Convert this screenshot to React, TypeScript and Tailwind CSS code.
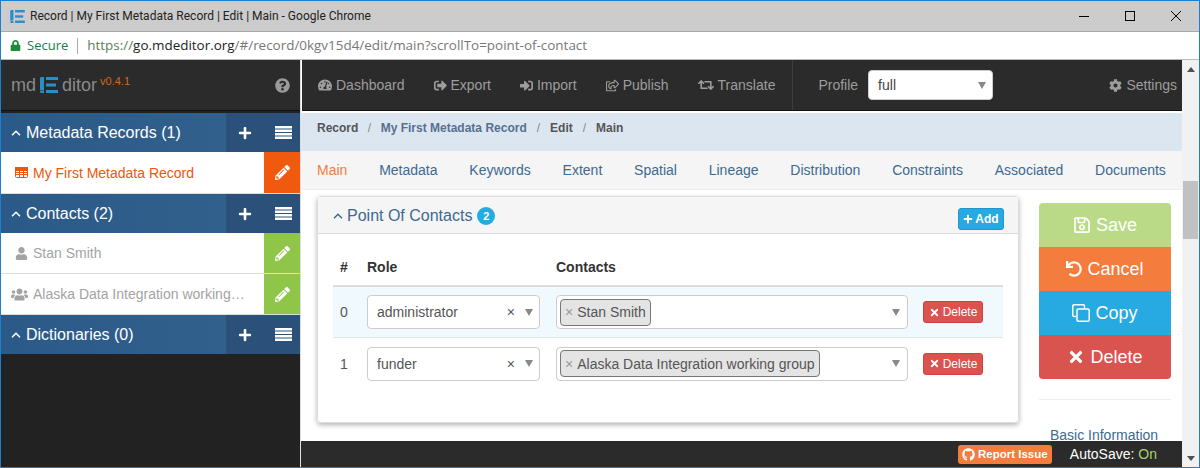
import React from 'react';
import {
  FaTachometerAlt, FaSignOutAlt, FaSignInAlt, FaRegShareSquare, FaRetweet, FaCog, FaQuestionCircle,
  FaPlus, FaPencilAlt, FaUser, FaUsers, FaRegSave, FaUndo,
  FaTimes, FaGithub, FaLock,
} from 'react-icons/fa';

const LogoMark = ({ className }: { className: string }) => (
  <svg viewBox="0 0 18 16" className={className} fill="#2a8fc9">
    <path d="M0 1.5C0 .7.6 0 1.4 0H4v13H1.4c-.6 0-1.1.2-1.4.5z" />
    <path d="M0 14.5c0-.7.6-1 1.4-1H4V16H1.400C.6 16 0 15.300 0 14.500z" />
    <rect x="6" y="0" width="12" height="3" />
    <rect x="6" y="6.500" width="10" height="3" />
    <rect x="6" y="13" width="12" height="3" />
  </svg>
);

const Caret = ({ className }: { className: string }) => (
  <svg viewBox="0 0 10 6" className={`w-[10px] h-[6px] shrink-0 ${className}`} fill="none" stroke="currentColor" strokeWidth="1.500">
    <path d="M1 5.200l4-4 4 4" />
  </svg>
);

const ListIcon = () => (
  <svg viewBox="0 0 17 13" className="w-[17px] h-[13px] ml-[23px]" fill="white">
    <rect x="0" y="0" width="17" height="2.500" />
    <rect x="0" y="3.500" width="17" height="2.500" />
    <rect x="0" y="7" width="17" height="2.500" />
    <rect x="0" y="10.500" width="17" height="2.500" />
  </svg>
);

const TableIcon = () => (
  <svg viewBox="0 0 13 11" className="w-[13px] h-[11px]" fill="none" stroke="#e8590c" strokeWidth="1">
    <rect x="0.500" y="0.500" width="12" height="10" rx="1" />
    <path d="M0 3.500h13M0 5.500h13M0 7.500h13M4.500 3v8M8.500 3v8" />
    <rect x="0.500" y="0.500" width="12" height="2.500" fill="#e8590c" />
  </svg>
);

const CopyIcon = () => (
  <svg viewBox="0 0 18 18" className="w-[18px] h-[18px]" fill="none" stroke="white" strokeWidth="1.500">
    <path d="M4 12.500H2a1.200 1.200 0 0 1-1.200-1.200V2A1.200 1.200 0 0 1 2 .8h9.300A1.200 1.200 0 0 1 12.500 2v2" />
    <rect x="5" y="5" width="12.200" height="12.200" rx="1.200" />
  </svg>
);

const Triangle = () => (
  <span className="w-0 h-0 border-x-[4px] border-x-transparent border-t-[7px] border-t-[#888] shrink-0" />
);

const SectionHeader = ({ title }: { title: string }) => (
  <div className="h-[39px] shrink-0 flex items-stretch bg-gradient-to-r from-[#2c5a88] to-[#34628f] text-white">
    <div className="flex-1 flex items-center pl-[10px] text-base">
      <Caret className="mr-[5px]" />
      <span>{title}</span>
    </div>
    <div className="w-[74px] bg-[#2b5079] flex items-center">
      <FaPlus className="text-[14px] ml-[12px]" />
      <ListIcon />
    </div>
  </div>
);

const SideItem = ({
  icon, label, color, editBg, tall,
}: { icon: React.ReactNode; label: string; color: string; editBg: string; tall?: boolean }) => (
  <div className={`${tall ? 'h-[41px]' : 'h-[40px]'} shrink-0 flex items-stretch bg-white`}>
    <div className={`flex-1 min-w-0 flex items-center text-sm pr-[18px] ${color}`}>
      <span className="w-[32px] flex justify-end pr-[5px] shrink-0">{icon}</span>
      <span className="truncate">{label}</span>
    </div>
    <div className={`w-[36px] flex items-center justify-center text-white ${editBg}`}>
      <FaPencilAlt className="text-[15px]" />
    </div>
  </div>
);

const Nav = ({ icon, label }: { icon: React.ReactNode; label: string }) => (
  <span className="flex items-center gap-[4px] text-sm text-[#9d9d9d]">
    {icon}
    {label}
  </span>
);

const tabs = ['Metadata', 'Keywords', 'Extent', 'Spatial', 'Lineage', 'Distribution', 'Constraints', 'Associated', 'Documents'];

const Row = ({
  idx, role, contact, striped,
}: { idx: string; role: string; contact: string; striped?: boolean }) => (
  <div className={`h-[51px] flex items-center pl-[7px] ${striped ? 'bg-[#f0f9fd] border-b border-[#e5e5e5]' : 'bg-white'}`}>
    <span className="w-[27px] text-sm text-[#555]">{idx}</span>
    <div className="w-[173px] h-[34px] border border-[#ccc] rounded flex items-center pl-[9px] pr-[6px] text-sm text-[#555] bg-white">
      <span className="flex-1">{role}</span>
      <span className="text-sm mr-[10px]">×</span>
      <Triangle />
    </div>
    <div className="w-[352px] h-[34px] ml-[16px] border border-[#ccc] rounded flex items-center pl-[3px] pr-[7px] bg-white">
      <div className="flex-1">
        <span className="inline-flex items-center h-[27px] px-[4px] bg-[#e4e4e4] border border-[#777] rounded text-sm text-[#555]">
          <span className="text-[#999] mr-[4px]">×</span>
          {contact}
        </span>
      </div>
      <Triangle />
    </div>
    <div className="ml-[15px] h-[22px] w-[60px] bg-[#d9534f] border border-[#d43f3a] rounded-[3px] text-white text-xs flex items-center justify-center gap-[3px]">
      <FaTimes className="text-[11px]" />
      Delete
    </div>
  </div>
);

const ActionBtn = ({
  icon, label, className,
}: { icon: React.ReactNode; label: string; className: string }) => (
  <div className={`h-[44px] flex items-center justify-center gap-[5px] text-white text-lg ${className}`}>
    {icon}
    {label}
  </div>
);

export default function App() {
  return (
    <div className="w-[1200px] h-[468px] flex flex-col overflow-hidden border border-[#1a7fd0] bg-white font-['Liberation_Sans',sans-serif]">
      {/* chrome title bar */}
      <div className="h-[31px] shrink-0 bg-[#cccccc] border-b border-[#a8a8a8] flex items-center pl-[9px] text-xs text-[#222] font-['Roboto',sans-serif]">
        <LogoMark className="w-[15px] h-[13px] mr-[5px]" />
        <span className="flex-1">Record | My First Metadata Record | Edit | Main - Google Chrome</span>
        <span className="w-[10px] h-px bg-black mr-[36px]" />
        <span className="w-[10px] h-[10px] border border-black mr-[36px]" />
        <svg viewBox="0 0 10 10" className="w-[10px] h-[10px] mr-[18px]" stroke="black" strokeWidth="1"><path d="M0 0l10 10M10 0L0 10" /></svg>
      </div>
      {/* address bar */}
      <div className="h-[28px] shrink-0 bg-white border-b border-[#bbb] flex items-center pl-[9px] font-['Open_Sans',sans-serif]">
        <FaLock className="text-[11px] text-[#1e8a3c] mr-[6px]" />
        <span className="text-[#1e7b4a] text-[13px]">Secure</span>
        <span className="w-px h-[16px] bg-[#aaa] mx-[9px]" />
        <span className="text-[13.450px]">
          <span className="text-[#5a7d5a]">https://</span>
          <span className="text-[#222]">go.mdeditor.org</span>
          <span className="text-[#777]">/#/record/0kgv15d4/edit/main?scrollTo=point-of-contact</span>
        </span>
      </div>

      <div className="flex-1 min-h-0 flex">
        {/* sidebar */}
        <div className="w-[300px] shrink-0 bg-[#222] flex flex-col border-r border-[#ddd]">
          <div className="h-[51px] shrink-0 bg-[#2b2b2b] border-b border-[#111] flex items-center pl-[10px] pr-[10px] mb-[2px]">
            <span className="text-lg text-[#8a8a8a]">md</span>
            <LogoMark className="w-[18px] h-[16px] mx-[4px]" />
            <span className="text-lg text-[#8a8a8a]">ditor</span>
            <span className="text-[11px] text-[#d2691e] self-start mt-[13px] ml-[3px] flex-1">v0.4.1</span>
            <FaQuestionCircle className="text-[15px] text-[#9a9a9a]" />
          </div>
          <SectionHeader title="Metadata Records (1)" />
          <SideItem icon={<TableIcon />} label="My First Metadata Record" color="text-[#e8590c]" editBg="bg-[#f05a0e]" tall />
          <div className="h-px shrink-0 bg-[#ddd]" />
          <SectionHeader title="Contacts (2)" />
          <SideItem icon={<FaUser className="text-[13px]" />} label="Stan Smith" color="text-[#a3a3a3]" editBg="bg-[#8fc549]" />
          <div className="h-px shrink-0 bg-[#ddd]" />
          <SideItem icon={<FaUsers className="text-[17px]" />} label="Alaska Data Integration working group" color="text-[#a3a3a3]" editBg="bg-[#8fc549]" />
          <div className="h-px shrink-0 bg-[#ddd]" />
          <SectionHeader title="Dictionaries (0)" />
        </div>

        {/* main */}
        <div className="flex-1 min-w-0 flex flex-col">
          <div className="h-[51px] shrink-0 bg-[#2b2b2b] border-b border-[#111] flex items-center pl-[16px] pr-[5px] ml-[1px] mb-[2px]">
            <div className="flex items-center gap-[29px] h-full border-r border-[#3d3d3d] pr-[17px]">
              <Nav icon={<FaTachometerAlt className="text-[14px]" />} label="Dashboard" />
              <Nav icon={<FaSignOutAlt className="text-[13px]" />} label="Export" />
              <Nav icon={<FaSignInAlt className="text-[13px]" />} label="Import" />
              <Nav icon={<FaRegShareSquare className="text-[13px]" />} label="Publish" />
              <Nav icon={<FaRetweet className="text-[16px]" />} label="Translate" />
            </div>
            <span className="ml-[25px] text-sm text-[#9d9d9d]">Profile</span>
            <div className="ml-[10px] w-[125px] h-[30px] bg-white rounded border border-[#ccc] flex items-center pl-[9px] pr-[6px] text-sm text-[#444]">
              <span className="flex-1">full</span>
              <Triangle />
            </div>
            <span className="ml-auto">
              <Nav icon={<FaCog className="text-[13px]" />} label="Settings" />
            </span>
          </div>

          <div className="h-[38px] shrink-0 bg-[#dce6f1] flex items-center pl-[16px] pb-[8px] text-xs font-bold text-[#555]">
            Record
            <span className="mx-[9.500px] font-normal text-[#888]">/</span>
            <span className="text-[#56708f]">My First Metadata Record</span>
            <span className="mx-[10px] font-normal text-[#888]">/</span>
            Edit
            <span className="mx-[10px] font-normal text-[#888]">/</span>
            Main
          </div>

          <div className="h-[39px] shrink-0 bg-[#f5f5f5] border-b border-[#eee] flex items-center pl-[16px] gap-[31.800px] text-sm text-[#3d6a91]">
            <span className="text-[#f47c3c]">Main</span>
            {tabs.map((t) => (
              <span key={t}>{t}</span>
            ))}
          </div>

          <div className="flex-1 min-h-0 overflow-hidden flex pl-[16px] pt-[6px] bg-white">
            <div className="w-[702px] h-[227px] shrink-0 border border-[#ddd] rounded shadow-[0_2px_5px_rgba(0,0,0,0.3)]">
              <div className="h-[37px] bg-[#f5f5f5] border-b border-[#ddd] flex items-center pt-[2px] pl-[15px] pr-[14px] text-base text-[#3d6a91]">
                <Caret className="mr-[4px]" />
                Point Of Contacts
                <span className="ml-[5px] w-[18px] h-[18px] rounded-full bg-[#27a9e1] text-white text-[11px] font-bold flex items-center justify-center">2</span>
                <span className="ml-auto self-end mb-[3px] h-[22px] w-[46px] bg-[#27a9e1] border border-[#1e96cc] rounded-[3px] text-white text-xs font-bold flex items-center justify-center gap-[2px]">
                  <FaPlus className="text-[10px]" />
                  Add
                </span>
              </div>
              <div className="pl-[15px] pr-[15px]">
                <div className="h-[53px] flex items-end pb-[8px] pl-[7px] text-sm font-bold text-[#333] border-b-2 border-[#ddd]">
                  <span className="w-[27px]">#</span>
                  <span className="w-[189px]">Role</span>
                  <span>Contacts</span>
                </div>
                <Row idx="0" role="administrator" contact="Stan Smith" striped />
                <Row idx="1" role="funder" contact="Alaska Data Integration working group" />
              </div>
            </div>

            <div className="w-[132px] ml-[20px] pt-[7px] shrink-0">
              <div className="rounded overflow-hidden">
                <ActionBtn icon={<FaRegSave />} label="Save" className="bg-[#bada87]" />
                <ActionBtn icon={<FaUndo className="text-base" />} label="Cancel" className="bg-[#f47c3c]" />
                <ActionBtn icon={<CopyIcon />} label="Copy" className="bg-[#27a9e1]" />
                <ActionBtn icon={<FaTimes />} label="Delete" className="bg-[#d9534f]" />
              </div>
              <div className="h-px bg-[#eee] mt-[20px]" />
              <div className="mt-[25px] pr-[2px] text-sm text-center text-[#3d6a91] whitespace-nowrap">Basic Information</div>
            </div>
          </div>

          <div className="h-[26px] shrink-0 bg-[#2b2b2b] flex items-center justify-end pr-[25px] text-sm text-white">
            <span className="h-[19px] w-[94px] bg-[#f47c3c] rounded-[3px] text-[11.500px] font-bold flex items-center justify-center gap-[3px]">
              <FaGithub className="text-[13px]" />
              Report Issue
            </span>
            <span className="ml-[18px]">AutoSave: <span className="text-[#a5d46a]">On</span></span>
          </div>
        </div>

        {/* scrollbar */}
        <div className="w-[17px] shrink-0 bg-[#f1f1f1] flex flex-col items-center pt-[7px]">
          <span className="w-0 h-0 border-x-[4px] border-x-transparent border-b-[5px] border-b-[#505050]" />
          <span className="w-[15px] h-[58px] bg-[#c1c1c1] mt-[109px]" />
          <span className="mt-auto mb-[6px] w-0 h-0 border-x-[4px] border-x-transparent border-t-[5px] border-t-[#505050]" />
        </div>
      </div>
    </div>
  );
}
